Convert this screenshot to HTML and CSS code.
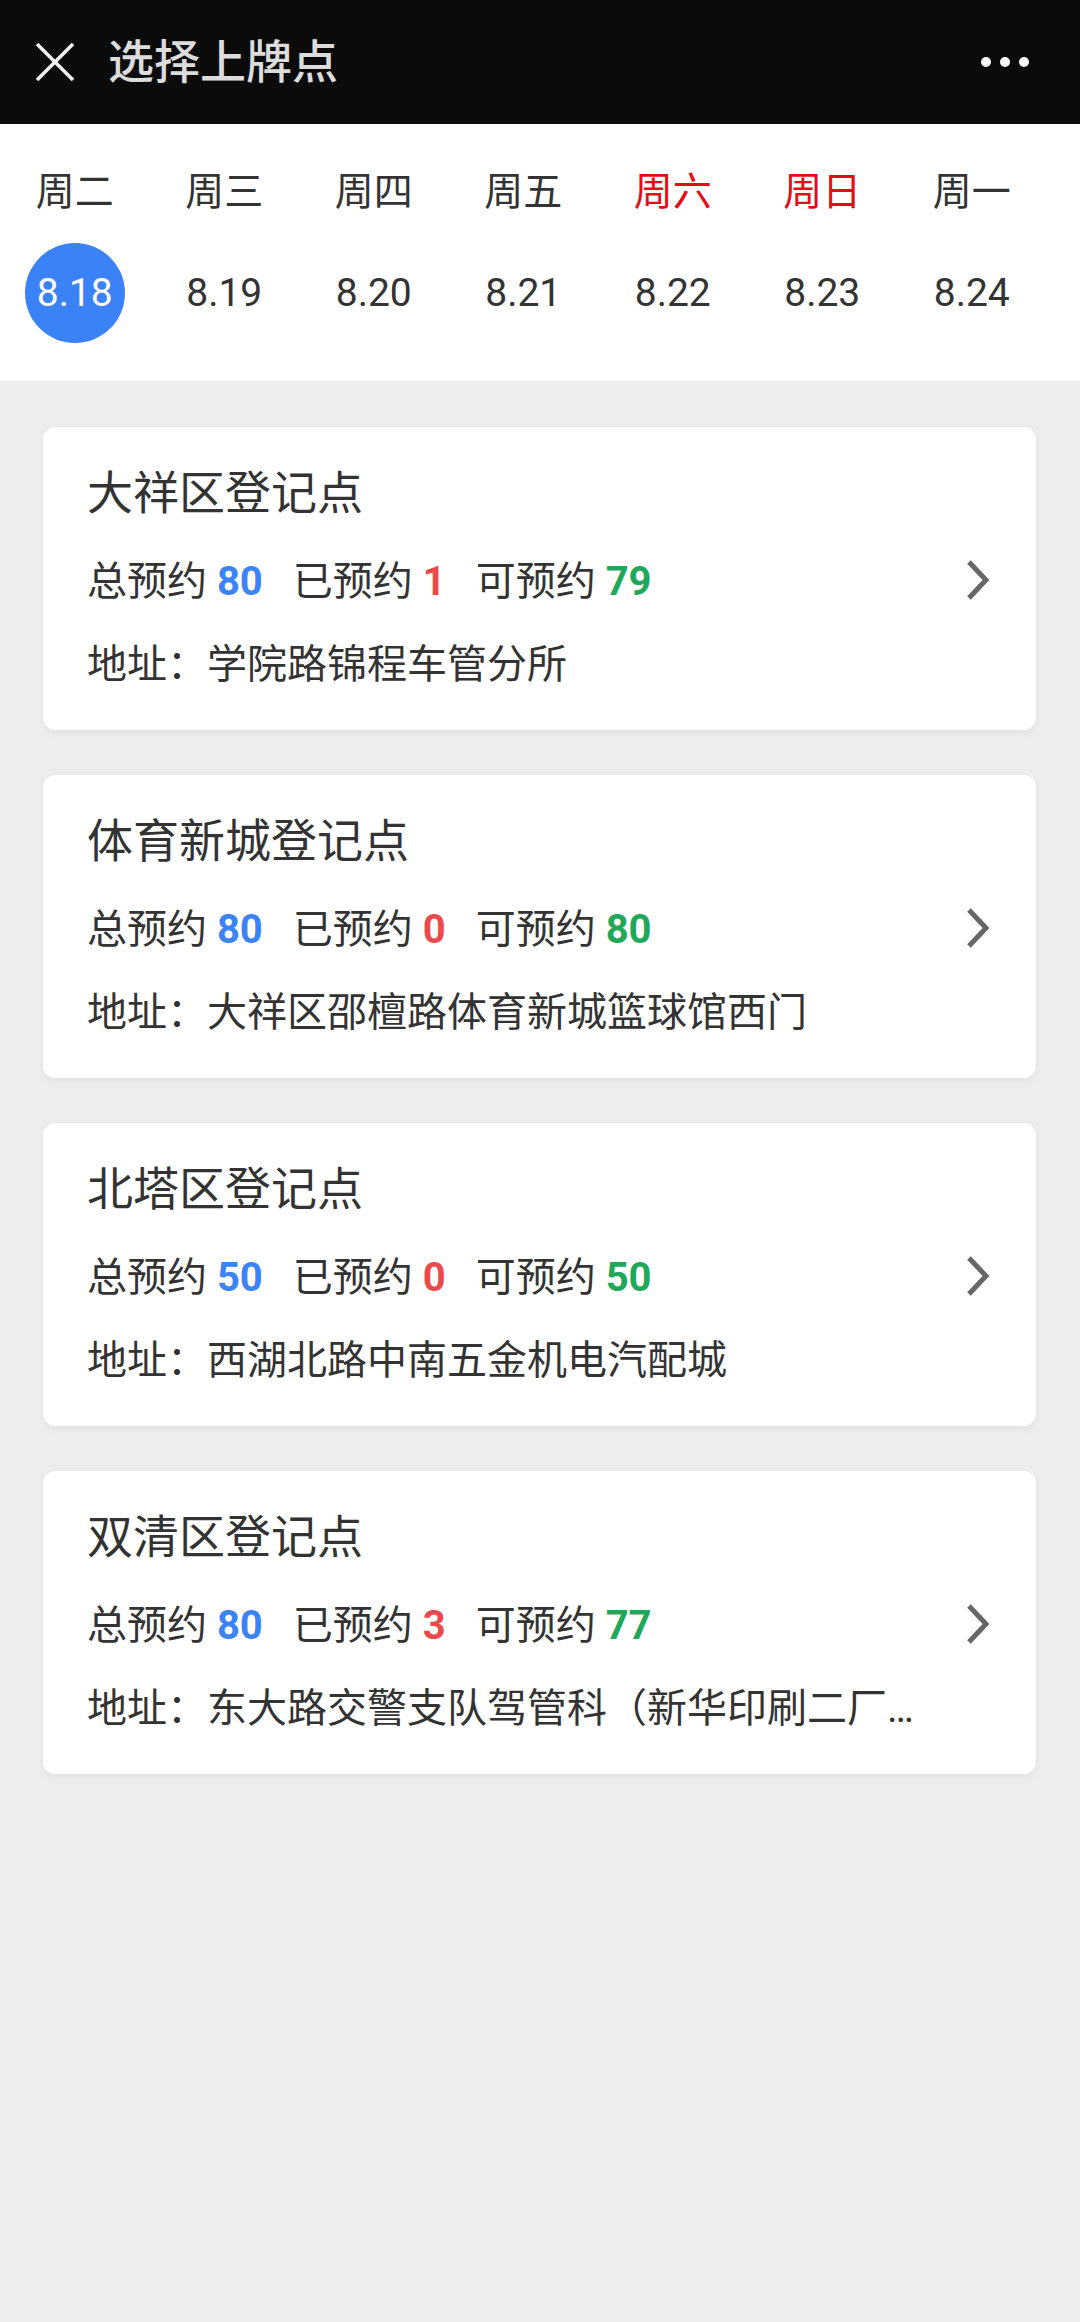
FILE: index.html
```html
<!DOCTYPE html>
<html lang="zh-CN">
<head>
    <meta charset="UTF-8">
    <meta name="viewport" content="width=device-width, initial-scale=1.0">
    <title>选择上牌点</title>
    <link rel="stylesheet" href="styles.css">
</head>
<body>
    <header class="topbar">
        <svg class="close-icon" width="40" height="40" viewBox="0 0 40 40">
            <line x1="2" y1="2" x2="38" y2="38" />
            <line x1="38" y1="2" x2="2" y2="38" />
        </svg>
        <h1 class="topbar-title">选择上牌点</h1>
        <svg class="more-icon" width="50" height="12" viewBox="0 0 50 12">
            <circle cx="6" cy="6" r="5" />
            <circle cx="25" cy="6" r="5" />
            <circle cx="44" cy="6" r="5" />
        </svg>
    </header>

    <!-- week selector -->
    <div class="week">
        <div class="day"><span class="day-name">周二</span><span class="day-date active">8.18</span></div>
        <div class="day"><span class="day-name">周三</span><span class="day-date">8.19</span></div>
        <div class="day"><span class="day-name">周四</span><span class="day-date">8.20</span></div>
        <div class="day"><span class="day-name">周五</span><span class="day-date">8.21</span></div>
        <div class="day"><span class="day-name weekend">周六</span><span class="day-date">8.22</span></div>
        <div class="day"><span class="day-name weekend">周日</span><span class="day-date">8.23</span></div>
        <div class="day"><span class="day-name">周一</span><span class="day-date">8.24</span></div>
    </div>

    <!-- registration points -->
    <div class="list">
        <div class="card">
            <div class="card-body">
                <div class="card-title">大祥区登记点</div>
                <div class="stats">
                    <span class="stat">总预约 <b class="num total">80</b></span>
                    <span class="stat">已预约 <b class="num used">1</b></span>
                    <span class="stat">可预约 <b class="num left">79</b></span>
                </div>
                <div class="address">地址：学院路锦程车管分所</div>
            </div>
            <svg class="arrow" width="26" height="42" viewBox="0 0 26 42"><polyline points="4,3 21,21 4,39" /></svg>
        </div>

        <div class="card">
            <div class="card-body">
                <div class="card-title">体育新城登记点</div>
                <div class="stats">
                    <span class="stat">总预约 <b class="num total">80</b></span>
                    <span class="stat">已预约 <b class="num used">0</b></span>
                    <span class="stat">可预约 <b class="num left">80</b></span>
                </div>
                <div class="address">地址：大祥区邵檀路体育新城篮球馆西门</div>
            </div>
            <svg class="arrow" width="26" height="42" viewBox="0 0 26 42"><polyline points="4,3 21,21 4,39" /></svg>
        </div>

        <div class="card">
            <div class="card-body">
                <div class="card-title">北塔区登记点</div>
                <div class="stats">
                    <span class="stat">总预约 <b class="num total">50</b></span>
                    <span class="stat">已预约 <b class="num used">0</b></span>
                    <span class="stat">可预约 <b class="num left">50</b></span>
                </div>
                <div class="address">地址：西湖北路中南五金机电汽配城</div>
            </div>
            <svg class="arrow" width="26" height="42" viewBox="0 0 26 42"><polyline points="4,3 21,21 4,39" /></svg>
        </div>

        <div class="card">
            <div class="card-body">
                <div class="card-title">双清区登记点</div>
                <div class="stats">
                    <span class="stat">总预约 <b class="num total">80</b></span>
                    <span class="stat">已预约 <b class="num used">3</b></span>
                    <span class="stat">可预约 <b class="num left">77</b></span>
                </div>
                <div class="address">地址：东大路交警支队驾管科（新华印刷二厂对面）</div>
            </div>
            <svg class="arrow" width="26" height="42" viewBox="0 0 26 42"><polyline points="4,3 21,21 4,39" /></svg>
        </div>
    </div>
</body>
</html>
```

FILE: styles.css
```css
body { margin: 0; padding: 0; min-height: 2322px; background-color: #ededed; font-family: Roboto, "Noto Sans CJK SC", sans-serif; color: #333; }

.topbar { height: 124px; background-color: #0b0b0b; display: flex; align-items: center; padding: 0 50px 0 35px; box-sizing: border-box; }
.close-icon { flex: none; }
.close-icon line { stroke: #f2f2f2; stroke-width: 3.5; }
.topbar-title { flex: 1; margin: 0 0 0 33px; font-size: 46px; font-weight: 500; color: #dcdcdc; line-height: 1; }
.more-icon { flex: none; }
.more-icon circle { fill: #fff; }

.week { display: flex; background: #fff; padding: 43px 0 38px; }
.day { width: 149.5px; flex: none; display: flex; flex-direction: column; align-items: center; }
.day-name { font-size: 39px; line-height: 50px; color: #333; }
.day-name.weekend { color: #e30d17; }
.day-date { margin-top: 26px; width: 100px; height: 100px; border-radius: 50%; display: flex; align-items: center; justify-content: center; font-size: 39px; color: #333; }
.day-date.active { background-color: #3b82f6; color: #fff; }

.list { padding: 46px 44px 0 43px; display: flex; flex-direction: column; gap: 45px; }
.card { background: #fff; border-radius: 12px; box-shadow: 0 3px 8px rgba(0, 0, 0, 0.05); display: flex; align-items: center; padding: 36px 45px 37px 44px; }
.card-body { flex: 1; min-width: 0; padding-right: 42px; }
.card-title { font-size: 46px; line-height: 60px; color: #333; }
.stats { margin-top: 31px; font-size: 40px; line-height: 56px; display: flex; gap: 30px; color: #333; }
.num { font-family: Roboto, sans-serif; font-weight: 700; }
.num.total { color: #3b83f6; }
.num.used { color: #ec4a4a; }
.num.left { color: #1fa85a; }
.address { margin-top: 27px; font-size: 40px; line-height: 56px; color: #333; white-space: nowrap; overflow: hidden; text-overflow: ellipsis; }
.arrow { flex: none; margin-top: 4px; }
.arrow polyline { fill: none; stroke: #666; stroke-width: 5; }
```
